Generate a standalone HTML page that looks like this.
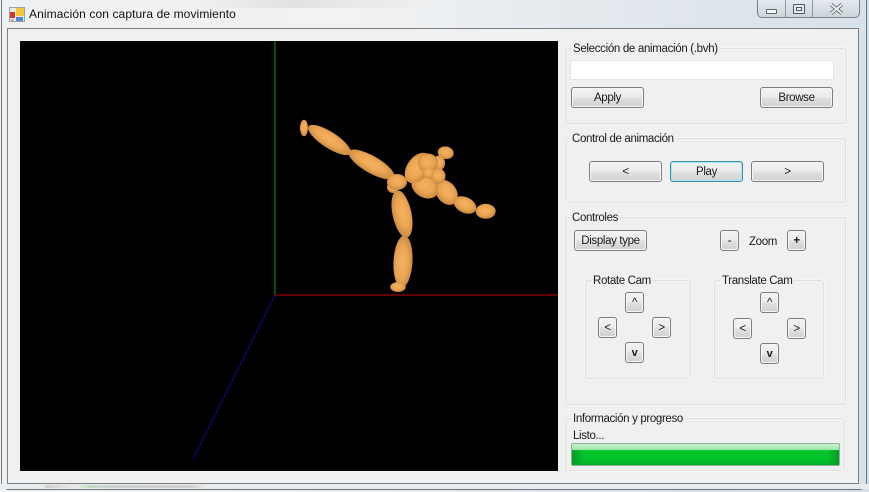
<!DOCTYPE html>
<html><head><meta charset="utf-8">
<style>
html,body{margin:0;padding:0;width:869px;height:492px;overflow:hidden;background:#e8eaec;font-family:"Liberation Sans",sans-serif;font-size:12px;color:#111}
.a{position:absolute;box-sizing:border-box}
.t{position:absolute;white-space:nowrap;line-height:14px;font-size:11.5px;letter-spacing:-.35px;color:#1a1a1a}
.g{position:absolute;box-sizing:border-box;border:1px solid #e0e0e0;border-radius:3px;background:#f0f0f0;box-shadow:0 0 0 1px #f6f6f6}
.l{position:absolute;white-space:nowrap;background:#f0f0f0;line-height:14px;font-size:11.5px;letter-spacing:-.35px;padding:0 2px;color:#1a1a1a}
.b{position:absolute;box-sizing:border-box;border:1px solid #7d7d7d;border-radius:3px;background:linear-gradient(#f3f3f3 0,#ececec 45%,#e0e0e0 55%,#d0d0d0 100%);box-shadow:inset 0 0 0 1px #f6f6f6;text-align:center;font-size:11.5px;letter-spacing:-.35px;line-height:20px;color:#1a1a1a}
</style></head><body>
<div class="a" style="left:0;top:0;width:869px;height:492px;background:linear-gradient(90deg,#f2f4f5 0,#eceeef 30%,#dfe5ea 60%,#d5dfe8 100%)"></div>
<div class="a" style="left:1px;top:-8px;width:866px;height:498px;border:1px solid #6d7378;border-radius:8px;background:linear-gradient(90deg,#eef0f1 0,#f1f2f3 40%,#dfe6ec 80%,#d8e2ea 100%)"></div>
<div class="a" style="left:200px;top:0;width:240px;height:8px;background:linear-gradient(90deg,#eef0f1,#d8dadc 40%,#e2e4e6 60%,#eef0f1);opacity:.7"></div>
<div class="a" style="left:0;top:484px;width:869px;height:5px;background:#e9ecee"></div>
<div class="a" style="left:45px;top:485px;width:160px;height:3px;background:linear-gradient(90deg,#c8c8c8 0,#d8d8d8 10%,#e8ebe8 20%,#b8d8b8 28%,#c8d0c8 35%,#c8c8c8 90%,#e8e8e8 100%);opacity:.8"></div>

<svg class="a" style="left:9px;top:7px" width="16" height="15" viewBox="0 0 16 15">
<rect x="0.5" y="0.5" width="15" height="14" fill="#e8e8e8" stroke="#9aa0a8"/>
<rect x="7" y="1" width="8" height="8" fill="#f2c83a"/>
<rect x="1" y="5" width="5" height="6" fill="#d8352a"/>
<rect x="7" y="10" width="7" height="4" fill="#4a8ad8"/>
<rect x="2" y="12" width="3" height="2" fill="#e8a8a0"/>
</svg>
<div class="t" style="left:29px;top:7px;font-size:12px;letter-spacing:.1px;color:#111">Animación con captura de movimiento</div>

<div class="a" style="left:757px;top:-4px;width:103px;height:22px;border:1px solid #7a8086;border-radius:0 0 5px 5px;background:linear-gradient(#e9eef2,#d8dfe5 55%,#ccd4da)"></div>
<div class="a" style="left:785px;top:0;width:1px;height:18px;background:#8f969c"></div>
<div class="a" style="left:812px;top:0;width:1px;height:18px;background:#8f969c"></div>
<div class="a" style="left:766px;top:9px;width:11px;height:5px;border:1px solid #5d6468;border-radius:1px;background:#f4f6f7"></div>
<div class="a" style="left:793px;top:4px;width:12px;height:10px;border:1px solid #50575c;border-radius:1px;background:#e6ebef"></div>
<div class="a" style="left:796px;top:7px;width:6px;height:4px;border:1px solid #50575c;background:#f4f6f7"></div>
<svg class="a" style="left:829px;top:3px" width="15" height="12" viewBox="0 0 15 12">
<path d="M2 1.5 L13 10.5 M13 1.5 L2 10.5" stroke="#5d6468" stroke-width="3.6" fill="none"/>
<path d="M2 1.5 L13 10.5 M13 1.5 L2 10.5" stroke="#f2f4f5" stroke-width="1.8" fill="none"/>
</svg>

<div class="a" style="left:7px;top:28px;width:852px;height:456px;border:1px solid #7c7f82;background:#f0f0f0"></div>

<svg class="a" style="left:20px;top:41px" width="538" height="430" viewBox="20 41 538 430">
<defs>
<radialGradient id="o" cx="48%" cy="45%" r="56%">
<stop offset="0" stop-color="#f4b262"/><stop offset=".55" stop-color="#eca653"/><stop offset="1" stop-color="#c58740"/>
</radialGradient>
</defs>
<rect x="20" y="41" width="538" height="430" fill="#000"/>
<line x1="275" y1="41" x2="275" y2="295" stroke="#087008" stroke-width="1.4"/>
<line x1="275" y1="295" x2="558" y2="295" stroke="#800008" stroke-width="1.4"/>
<line x1="275" y1="295" x2="193" y2="459" stroke="#0a0a70" stroke-width="1.3"/>
<g fill="url(#o)">
<ellipse cx="304" cy="128" rx="4" ry="8.3"/>
<ellipse cx="329.5" cy="140" rx="25" ry="8" transform="rotate(33 329.5 140)"/>
<ellipse cx="371.5" cy="164.5" rx="26" ry="8.5" transform="rotate(30 371.5 164.5)"/>
<ellipse cx="402" cy="214" rx="24" ry="9.5" transform="rotate(78 402 214)"/>
<ellipse cx="403" cy="261.5" rx="26" ry="9.5" transform="rotate(-87 403 261.5)"/>
<ellipse cx="398" cy="287" rx="7.8" ry="5"/>
<ellipse cx="393" cy="187" rx="6" ry="6"/>
<ellipse cx="397" cy="182" rx="10" ry="8"/>
<ellipse cx="445.7" cy="152.7" rx="8" ry="6.3" transform="rotate(10 445.7 152.7)"/>
<ellipse cx="425" cy="186.5" rx="14.5" ry="11" transform="rotate(32 425 186.5)"/>
<ellipse cx="418" cy="168" rx="17" ry="11" transform="rotate(-55 418 168)"/>
<ellipse cx="439" cy="163" rx="6" ry="7.5"/>
<ellipse cx="428" cy="163" rx="10" ry="9.5"/>
<ellipse cx="429" cy="173" rx="6.5" ry="5.5"/>
<ellipse cx="446.5" cy="192.5" rx="13.5" ry="10" transform="rotate(55 446.5 192.5)"/>
<ellipse cx="438.5" cy="176" rx="7" ry="7.5"/>
<ellipse cx="465" cy="205" rx="12" ry="7.8" transform="rotate(25 465 205)"/>
<ellipse cx="485.7" cy="211.3" rx="10" ry="7.5"/>
</g>
</svg>

<!-- Group 1 -->
<div class="g" style="left:565px;top:48px;width:282px;height:76px"></div>
<div class="l" style="left:571px;top:42px;letter-spacing:-.32px">Selección de animación (.bvh)</div>
<div class="a" style="left:570px;top:60px;width:264px;height:20px;background:#fff;border:1px solid #e2e3e4"></div>
<div class="b" style="left:571px;top:87px;width:73px;height:21px">Apply</div>
<div class="b" style="left:760px;top:87px;width:73px;height:21px">Browse</div>

<!-- Group 2 -->
<div class="g" style="left:565px;top:138px;width:281px;height:65px"></div>
<div class="l" style="left:570px;top:132px">Control de animación</div>
<div class="b" style="left:589px;top:161px;width:73px;height:21px">&lt;</div>
<div class="b" style="left:670px;top:161px;width:73px;height:21px;border-color:#3f8ea8;box-shadow:inset 0 0 0 1px #a8e4f4">Play</div>
<div class="b" style="left:751px;top:161px;width:73px;height:21px">&gt;</div>

<!-- Group 3 -->
<div class="g" style="left:565px;top:217px;width:281px;height:188px"></div>
<div class="l" style="left:570px;top:211px">Controles</div>
<div class="b" style="left:574px;top:230px;width:73px;height:21px">Display type</div>
<div class="b" style="left:720px;top:230px;width:19px;height:21px">-</div>
<div class="t" style="left:749px;top:235px">Zoom</div>
<div class="b" style="left:787px;top:230px;width:19px;height:21px;font-weight:bold">+</div>

<div class="g" style="left:585px;top:280px;width:106px;height:99px"></div>
<div class="l" style="left:591px;top:274px">Rotate Cam</div>
<div class="b" style="left:625px;top:292px;width:19px;height:21px">^</div>
<div class="b" style="left:598px;top:317px;width:19px;height:21px">&lt;</div>
<div class="b" style="left:652px;top:317px;width:19px;height:21px">&gt;</div>
<div class="b" style="left:625px;top:342px;width:19px;height:21px;font-weight:bold;font-size:11px">v</div>

<div class="g" style="left:714px;top:280px;width:110px;height:99px"></div>
<div class="l" style="left:720px;top:274px">Translate Cam</div>
<div class="b" style="left:760px;top:292px;width:19px;height:21px">^</div>
<div class="b" style="left:733px;top:318px;width:19px;height:21px">&lt;</div>
<div class="b" style="left:787px;top:318px;width:19px;height:21px">&gt;</div>
<div class="b" style="left:760px;top:343px;width:19px;height:21px;font-weight:bold;font-size:11px">v</div>

<!-- Group 4 -->
<div class="g" style="left:565px;top:418px;width:280px;height:53px"></div>
<div class="l" style="left:571px;top:412px">Información y progreso</div>
<div class="t" style="left:573px;top:429px">Listo...</div>
<div class="a" style="left:571px;top:443px;width:269px;height:23px;border:1px solid #8fb09a;border-radius:2px;background:linear-gradient(#c8f0cc 0,#a4e8ac 26%,#05c42c 32%,#05c42c 70%,#04b028 100%)"></div>
<div class="a" style="left:572px;top:450px;width:12px;height:15px;background:linear-gradient(90deg,#079a28,rgba(5,196,44,0))"></div>
<div class="a" style="left:827px;top:450px;width:12px;height:15px;background:linear-gradient(270deg,#079a28,rgba(5,196,44,0))"></div>
</body></html>
